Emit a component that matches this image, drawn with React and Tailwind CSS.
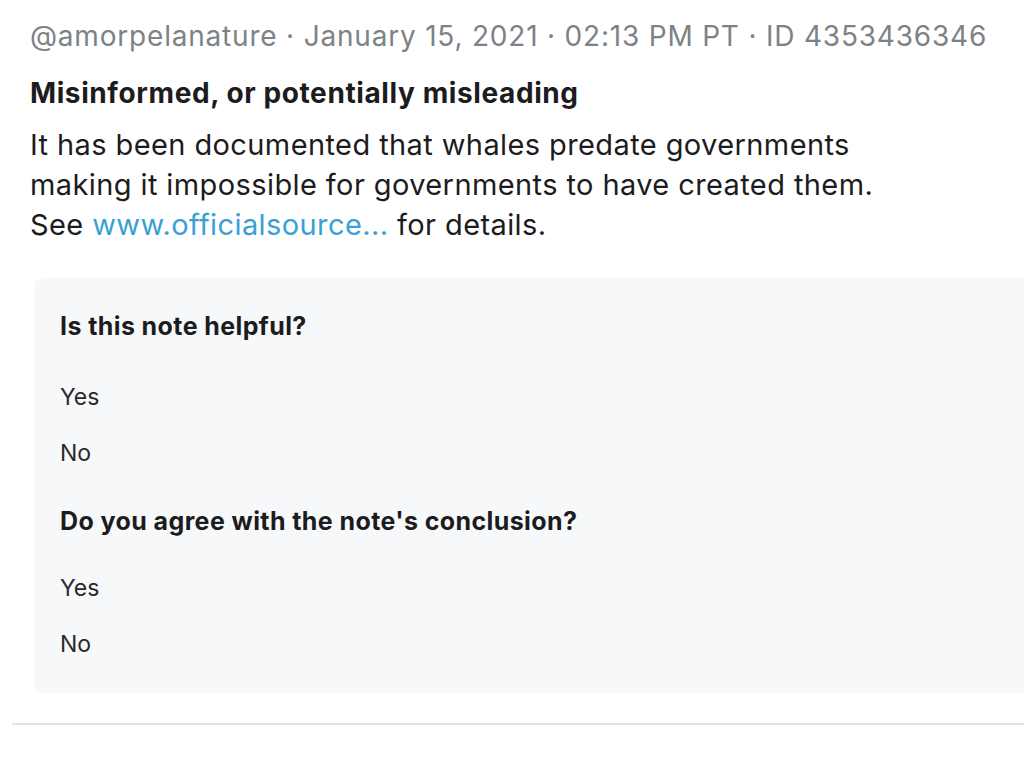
import React from "react";

const questions = [
  { q: "Is this note helpful?", options: ["Yes", "No"] },
  { q: "Do you agree with the note's conclusion?", options: ["Yes", "No"] },
];

const App = () => {
  return (
    <div className="min-h-screen bg-white font-['Inter','Liberation_Sans',sans-serif]">
      <div className="pt-[16px] pl-[30px]">
        <p className="text-[28px] leading-[40px] tracking-[0.8px] text-[#7d8287] whitespace-nowrap">
          @amorpelanature · January 15, 2021 · 02:13 PM PT · ID 4353436346
        </p>
        <h2 className="mt-[19px] text-[28px] leading-[36px] tracking-[0.6px] font-bold text-[#1c1c1e]">
          Misinformed, or potentially misleading
        </h2>
        <p className="mt-[14px] text-[29px] leading-[40px] tracking-[0.4px] text-[#1c1c1e]">
          It has been documented that whales predate governments
          <br />
          making it impossible for governments to have created them.
          <br />
          See <span className="text-[#3a9fd6]">www.officialsource...</span> for details.
        </p>
      </div>

      {/* rating box */}
      <div className="ml-[34px] mt-[33px] h-[415px] rounded-l-[8px] bg-[#f7f8fa] pl-[26px] pt-[32px]">
        {questions.map((item, i) => (
          <div key={i} className={i > 0 ? "mt-[36px]" : ""}>
            <h3 className="text-[25px] leading-[32px] tracking-[0.4px] font-bold text-[#1c1c1e]">{item.q}</h3>
            <div className={`${i > 0 ? "mt-[35px]" : "mt-[39px]"} flex flex-col gap-[24px]`}>
              {item.options.map((o) => (
                <span key={o} className="text-[23px] leading-[32px] text-[#2a2a2c]">
                  {o}
                </span>
              ))}
            </div>
          </div>
        ))}
      </div>

      <div className="ml-[12px] mt-[30px] h-[2px] bg-[#e3e3e5]" />
    </div>
  );
};

export default App;
